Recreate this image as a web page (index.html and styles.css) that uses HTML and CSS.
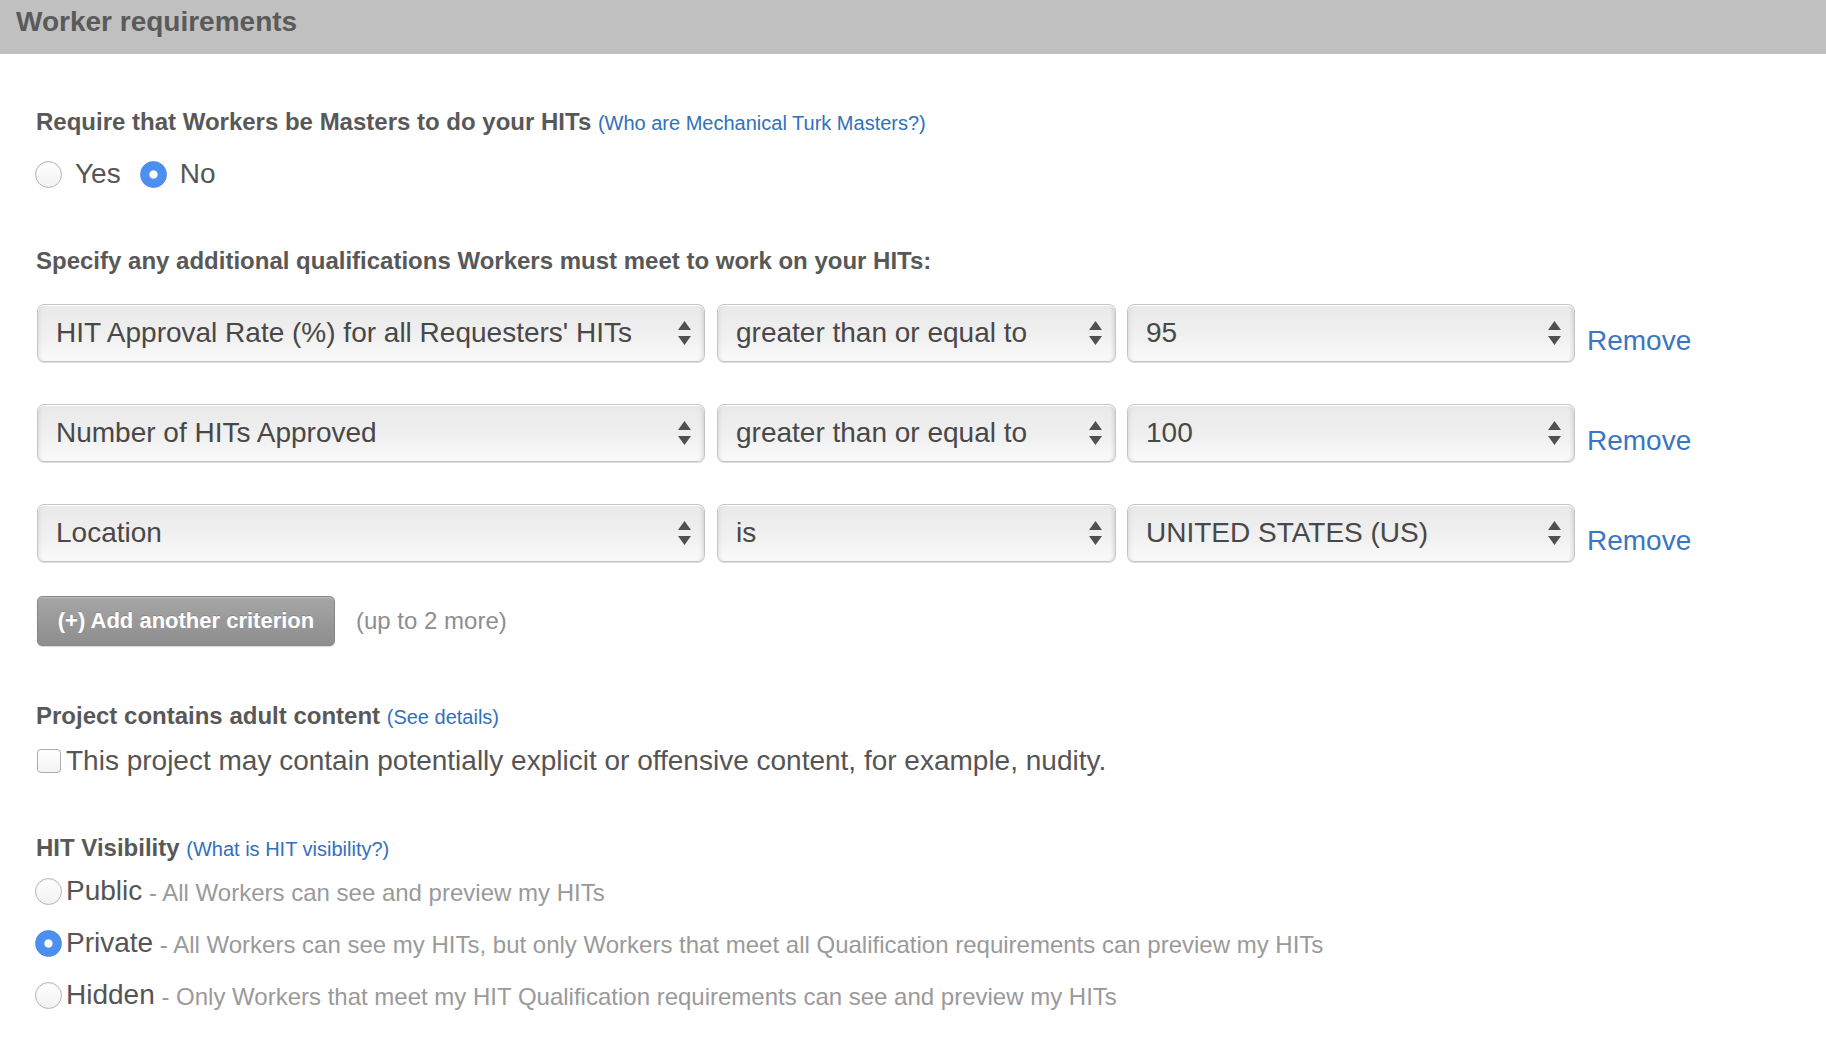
FILE: index.html
```html
<!DOCTYPE html>
<html lang="en">
<head>
<meta charset="utf-8">
<title>Worker requirements</title>
<link rel="stylesheet" href="styles.css">
</head>
<body>
<header class="panel-head">
  <h2 class="panel-title">Worker requirements</h2>
</header>
<main class="panel-body">
  <div class="field-label first">Require that Workers be Masters to do your HITs <a class="help" href="#">(Who are Mechanical Turk Masters?)</a></div>
  <div class="yn-row">
    <label class="yn"><input type="radio" name="masters" class="radio"><span>Yes</span></label>
    <label class="yn"><input type="radio" name="masters" class="radio" checked><span>No</span></label>
  </div>

  <div class="field-label spec">Specify any additional qualifications Workers must meet to work on your HITs:</div>

  <div class="crit-list">
    <div class="crit-row">
      <div class="sel sel-qual"><span class="sel-text">HIT Approval Rate (%) for all Requesters' HITs</span><svg class="arrows" width="13" height="24" viewBox="0 0 13 24"><path d="M6.5 0L13 9H0z M0 15H13L6.5 24z"/></svg></div>
      <div class="sel sel-cmp"><span class="sel-text">greater than or equal to</span><svg class="arrows" width="13" height="24" viewBox="0 0 13 24"><path d="M6.5 0L13 9H0z M0 15H13L6.5 24z"/></svg></div>
      <div class="sel sel-val"><span class="sel-text">95</span><svg class="arrows" width="13" height="24" viewBox="0 0 13 24"><path d="M6.5 0L13 9H0z M0 15H13L6.5 24z"/></svg></div>
      <a class="remove" href="#">Remove</a>
    </div>
    <div class="crit-row">
      <div class="sel sel-qual"><span class="sel-text">Number of HITs Approved</span><svg class="arrows" width="13" height="24" viewBox="0 0 13 24"><path d="M6.5 0L13 9H0z M0 15H13L6.5 24z"/></svg></div>
      <div class="sel sel-cmp"><span class="sel-text">greater than or equal to</span><svg class="arrows" width="13" height="24" viewBox="0 0 13 24"><path d="M6.5 0L13 9H0z M0 15H13L6.5 24z"/></svg></div>
      <div class="sel sel-val"><span class="sel-text">100</span><svg class="arrows" width="13" height="24" viewBox="0 0 13 24"><path d="M6.5 0L13 9H0z M0 15H13L6.5 24z"/></svg></div>
      <a class="remove" href="#">Remove</a>
    </div>
    <div class="crit-row">
      <div class="sel sel-qual"><span class="sel-text">Location</span><svg class="arrows" width="13" height="24" viewBox="0 0 13 24"><path d="M6.5 0L13 9H0z M0 15H13L6.5 24z"/></svg></div>
      <div class="sel sel-cmp"><span class="sel-text">is</span><svg class="arrows" width="13" height="24" viewBox="0 0 13 24"><path d="M6.5 0L13 9H0z M0 15H13L6.5 24z"/></svg></div>
      <div class="sel sel-val"><span class="sel-text">UNITED STATES (US)</span><svg class="arrows" width="13" height="24" viewBox="0 0 13 24"><path d="M6.5 0L13 9H0z M0 15H13L6.5 24z"/></svg></div>
      <a class="remove" href="#">Remove</a>
    </div>
  </div>

  <div class="add-row">
    <button class="add-btn" type="button">(+) Add another criterion</button>
    <span class="add-note">(up to 2 more)</span>
  </div>

  <div class="field-label adult">Project contains adult content <a class="help" href="#">(See details)</a></div>
  <label class="check-row"><input type="checkbox" class="check"><span>This project may contain potentially explicit or offensive content, for example, nudity.</span></label>

  <div class="field-label vis">HIT Visibility <a class="help" href="#">(What is HIT visibility?)</a></div>
  <div class="vis-list">
    <label class="vis-row"><input type="radio" name="vis" class="radio"><span class="vis-name">Public</span><span class="vis-desc">&nbsp;- All Workers can see and preview my HITs</span></label>
    <label class="vis-row"><input type="radio" name="vis" class="radio" checked><span class="vis-name">Private</span><span class="vis-desc">&nbsp;- All Workers can see my HITs, but only Workers that meet all Qualification requirements can preview my HITs</span></label>
    <label class="vis-row"><input type="radio" name="vis" class="radio"><span class="vis-name">Hidden</span><span class="vis-desc">&nbsp;- Only Workers that meet my HIT Qualification requirements can see and preview my HITs</span></label>
  </div>
</main>
</body>
</html>
```

FILE: styles.css
```css
* { box-sizing: border-box; }

html, body {
  margin: 0;
  padding: 0;
  background: #ffffff;
}

body {
  font-family: "Liberation Sans", Arial, Helvetica, sans-serif;
  color: #555555;
  width: 1826px;
  height: 1044px;
  overflow: hidden;
}

.panel-head {
  height: 54px;
  background: #c0c0c0;
  padding: 6px 0 0 16px;
}

.panel-title {
  margin: 0;
  font-size: 28px;
  line-height: 32px;
  font-weight: bold;
  color: #5a5a5a;
}

.panel-body {
  padding: 0 36px;
}

.field-label {
  font-size: 24px;
  line-height: 28px;
  font-weight: bold;
  color: #585858;
  white-space: nowrap;
}

.field-label.first { margin-top: 54px; }
.field-label.spec { margin-top: 57px; }
.field-label.adult { margin-top: 56px; }
.field-label.vis { margin-top: 57px; }

.help {
  font-size: 20px;
  font-weight: normal;
  color: #3270bb;
  text-decoration: none;
}

/* radio + checkbox controls */
.radio {
  -webkit-appearance: none;
  appearance: none;
  margin: 0;
  width: 27px;
  height: 27px;
  border-radius: 50%;
  border: 1px solid #b4b4b4;
  background: linear-gradient(#ffffff, #f1f1f1);
  box-shadow: inset 0 1px 1px rgba(0,0,0,0.06);
  flex: none;
}

.radio:checked {
  border-color: #4a8cea;
  background: radial-gradient(circle at center, #ffffff 0, #ffffff 3.6px, #4f91f1 4.6px, #4a8ced 100%);
  box-shadow: none;
}

.check {
  -webkit-appearance: none;
  appearance: none;
  margin: 0;
  width: 24px;
  height: 24px;
  border-radius: 4px;
  border: 1px solid #adadad;
  background: linear-gradient(#ffffff, #f3f3f3);
  flex: none;
}

.yn-row {
  margin-top: 21px;
  height: 32px;
  display: flex;
  align-items: center;
  margin-left: -1px;
}

.yn {
  display: flex;
  align-items: center;
  gap: 13px;
  font-size: 28px;
  color: #555555;
  margin-right: 19px;
}

/* criteria */
.crit-list {
  margin-top: 29px;
  display: flex;
  flex-direction: column;
  gap: 42px;
  padding-left: 1px;
}

.crit-row {
  display: flex;
  align-items: flex-start;
  height: 58px;
}

.sel {
  height: 58px;
  display: flex;
  align-items: center;
  justify-content: space-between;
  padding: 0 13px 0 18px;
  border: 1px solid #c6c6c6;
  border-radius: 7px;
  background: linear-gradient(#e9e9e9 0%, #f0f0f0 55%, #fafafa 100%);
  box-shadow: inset 0 1px 0 #ffffff,
              inset 4px 0 4px -3px rgba(0,0,0,0.10),
              inset -4px 0 4px -3px rgba(0,0,0,0.14),
              0 1px 0 #dcdcdc;
  font-size: 28px;
  color: #484848;
  white-space: nowrap;
}

.sel-qual { width: 668px; margin-right: 12px; }
.sel-cmp { width: 399px; margin-right: 11px; }
.sel-val { width: 448px; margin-right: 12px; }

.arrows {
  fill: #505050;
  flex: none;
}

.remove {
  font-size: 28px;
  line-height: 32px;
  padding-top: 21px;
  color: #3a76c1;
  text-decoration: none;
}

.add-row {
  margin-top: 34px;
  display: flex;
  align-items: center;
  padding-left: 1px;
}

.add-btn {
  width: 298px;
  height: 50px;
  padding: 0;
  border: 1px solid #878787;
  border-radius: 5px;
  background: linear-gradient(#a6a6a6, #8d8d8d);
  box-shadow: inset 0 1px 0 rgba(255,255,255,0.25), 0 1px 1px rgba(0,0,0,0.15);
  color: #ffffff;
  font-family: "Liberation Sans", Arial, Helvetica, sans-serif;
  font-size: 22px;
  font-weight: bold;
  text-shadow: 0 -1px 0 rgba(0,0,0,0.15);
}

.add-note {
  margin-left: 21px;
  font-size: 24px;
  color: #8e8e8e;
}

.check-row {
  margin-top: 14px;
  height: 32px;
  display: flex;
  align-items: center;
  gap: 5px;
  padding-left: 1px;
  font-size: 28px;
  color: #555555;
  white-space: nowrap;
}

.vis-list {
  margin-top: 8px;
  display: flex;
  flex-direction: column;
  gap: 12px;
}

.vis-row {
  height: 40px;
  display: flex;
  align-items: center;
  margin-left: -1px;
  white-space: nowrap;
}

.vis-name {
  margin-left: 4px;
  font-size: 28px;
  color: #555555;
}

.vis-desc {
  font-size: 24px;
  color: #9a9a9a;
  padding-top: 3px;
}
```
